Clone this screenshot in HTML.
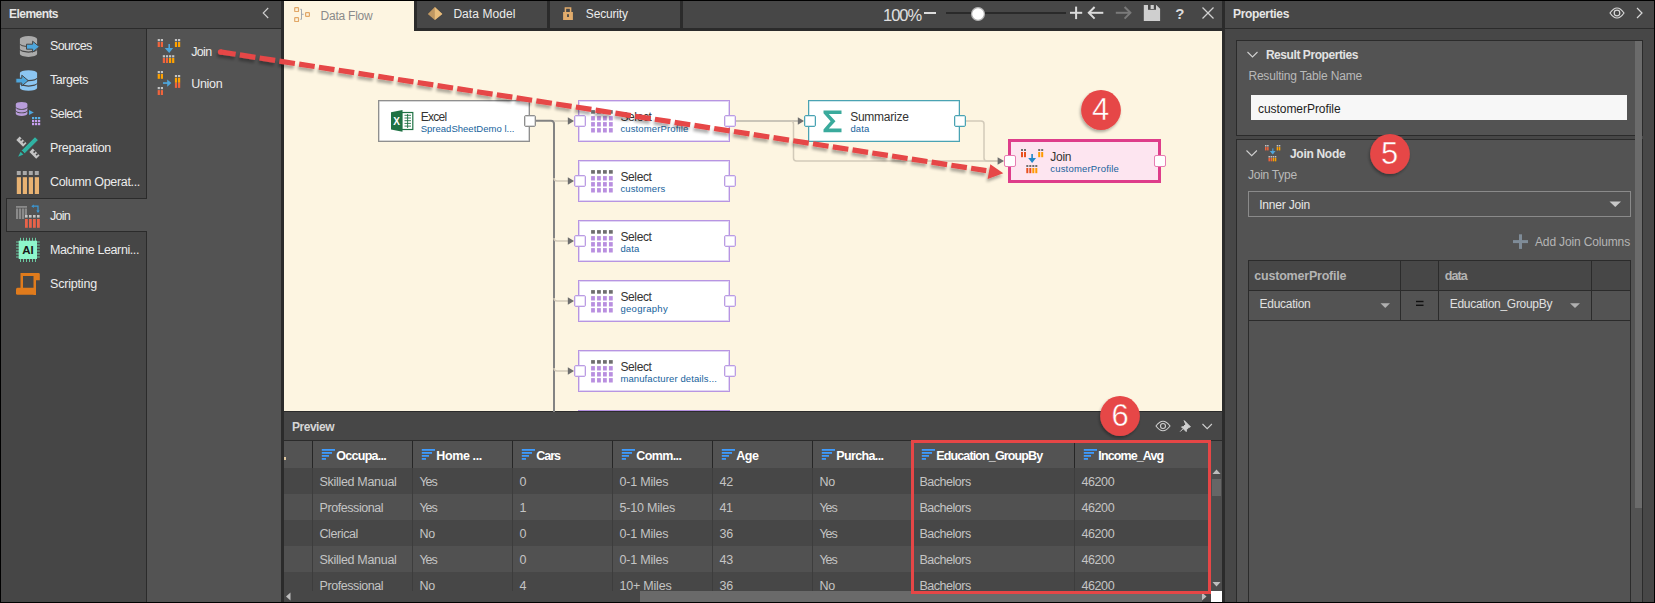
<!DOCTYPE html>
<html><head><meta charset="utf-8"><style>
html,body{margin:0;padding:0;}
body{width:1655px;height:603px;overflow:hidden;position:relative;background:#000;font-family:"Liberation Sans", sans-serif;}
.t{position:absolute;white-space:nowrap;line-height:1;}
svg{overflow:visible}
</style></head><body>
<div style="position:absolute;left:1px;top:1px;width:280px;height:27px;background:#474747;"></div>
<div style="position:absolute;left:1px;top:28px;width:280px;height:1px;background:#2b2b2b;"></div>
<div style="position:absolute;left:1px;top:29px;width:145px;height:574px;background:#464646;"></div>
<div style="position:absolute;left:146px;top:29px;width:1px;height:574px;background:#2b2b2b;"></div>
<div style="position:absolute;left:147px;top:29px;width:134px;height:574px;background:#535353;"></div>
<div style="position:absolute;left:281px;top:1px;width:3px;height:602px;background:#2b2b2b;"></div>
<div style="position:absolute;left:6px;top:198px;width:141px;height:34px;box-sizing:border-box;border:1px solid #2b2b2b;background:#535353;border-right:none;"></div>
<div class="t" id="T0" style="left:9px;top:7.84px;font-size:12px;color:#e6e6e6;font-weight:700;letter-spacing:-0.545px;">Elements</div>
<svg style="position:absolute;left:255px;top:0px;" width="20" height="30" viewBox="255 0 20 30"><polyline points="268.2,8 263.2,13 268.2,18" fill="none" stroke="#d0d0d0" stroke-width="1.1"/></svg>
<div class="t" id="T1" style="left:50px;top:40.02px;font-size:12.5px;color:#ececec;font-weight:400;letter-spacing:-0.594px;">Sources</div>
<div class="t" id="T2" style="left:50px;top:74.02px;font-size:12.5px;color:#ececec;font-weight:400;letter-spacing:-0.429px;">Targets</div>
<div class="t" id="T3" style="left:50px;top:108.02px;font-size:12.5px;color:#ececec;font-weight:400;letter-spacing:-0.575px;">Select</div>
<div class="t" id="T4" style="left:50px;top:142.02px;font-size:12.5px;color:#ececec;font-weight:400;letter-spacing:-0.330px;">Preparation</div>
<div class="t" id="T5" style="left:50px;top:176.02px;font-size:12.5px;color:#ececec;font-weight:400;letter-spacing:-0.324px;">Column Operat...</div>
<div class="t" id="T6" style="left:50px;top:210.02px;font-size:12.5px;color:#ececec;font-weight:400;letter-spacing:-0.734px;">Join</div>
<div class="t" id="T7" style="left:50px;top:244.02px;font-size:12.5px;color:#ececec;font-weight:400;letter-spacing:-0.405px;">Machine Learni...</div>
<div class="t" id="T8" style="left:50px;top:278.02px;font-size:12.5px;color:#ececec;font-weight:400;letter-spacing:-0.182px;">Scripting</div>
<div class="t" id="T9" style="left:191.2px;top:45.92px;font-size:12.5px;color:#ececec;font-weight:400;letter-spacing:-0.634px;">Join</div>
<div class="t" id="T10" style="left:191.2px;top:77.92px;font-size:12.5px;color:#ececec;font-weight:400;letter-spacing:-0.274px;">Union</div>
<div style="position:absolute;left:284px;top:1px;width:938px;height:27px;background:#474747;"></div>
<div style="position:absolute;left:284px;top:28px;width:938px;height:3px;background:#2b2b2b;"></div>
<div style="position:absolute;left:284px;top:1px;width:130px;height:30px;background:#fdf5e1;"></div>
<div style="position:absolute;left:414px;top:1px;width:3px;height:30px;background:#2b2b2b;"></div>
<div style="position:absolute;left:547px;top:1px;width:3px;height:30px;background:#2b2b2b;"></div>
<div style="position:absolute;left:680px;top:1px;width:3px;height:30px;background:#2b2b2b;"></div>
<div class="t" id="T11" style="left:320.5px;top:10.14px;font-size:12px;color:#8a8a8a;font-weight:400;letter-spacing:-0.226px;">Data Flow</div>
<div class="t" id="T12" style="left:453.4px;top:8.14px;font-size:12px;color:#ececec;font-weight:400;letter-spacing:0.062px;">Data Model</div>
<div class="t" id="T13" style="left:585.8px;top:8.14px;font-size:12px;color:#ececec;font-weight:400;letter-spacing:-0.170px;">Security</div>
<div class="t" id="T14" style="left:883px;top:6.53px;font-size:16.5px;color:#e0e0e0;font-weight:400;letter-spacing:-1.051px;">100%</div>
<div style="position:absolute;left:284px;top:31px;width:938px;height:380px;background:#fdf5e1;"></div>
<div style="position:absolute;left:284px;top:411px;width:938px;height:1px;background:#2b2b2b;"></div>
<div style="position:absolute;left:284px;top:412px;width:938px;height:28px;background:#474747;"></div>
<div class="t" id="T15" style="left:292px;top:420.84px;font-size:12px;color:#d6d6d6;font-weight:700;letter-spacing:-0.482px;">Preview</div>
<div style="position:absolute;left:284px;top:440px;width:938px;height:1px;background:#2b2b2b;"></div>
<div style="position:absolute;left:1222px;top:1px;width:3px;height:602px;background:#2b2b2b;"></div>
<div style="position:absolute;left:1225px;top:1px;width:429px;height:27px;background:#474747;"></div>
<div style="position:absolute;left:1225px;top:28px;width:429px;height:1px;background:#2b2b2b;"></div>
<div style="position:absolute;left:1225px;top:29px;width:429px;height:573px;background:#474747;"></div>
<div style="position:absolute;left:1236px;top:40px;width:407px;height:96px;box-sizing:border-box;border:1px solid #2b2b2b;background:#535353;"></div>
<div style="position:absolute;left:1236px;top:139px;width:407px;height:470px;box-sizing:border-box;border:1px solid #2b2b2b;background:#535353;"></div>
<div style="position:absolute;left:1635px;top:41px;width:7px;height:467px;background:#6b6b6b;"></div>
<div class="t" id="T16" style="left:1233px;top:7.84px;font-size:12px;color:#e6e6e6;font-weight:700;letter-spacing:-0.336px;">Properties</div>
<svg style="position:absolute;left:14px;top:30px;" width="30" height="32" viewBox="14 30 30 32"><g fill="#ababab">
<path d="M19.9,38.90 a8.6,2.8 0 0 1 17.2,0 v4.27 a8.6,2.8 0 0 1 -17.2,0z"/>
<path d="M19.9,44.37 a8.6,2.8 0 0 0 17.2,0 v4.27 a8.6,2.8 0 0 1 -17.2,0z"/>
<path d="M19.9,49.84 a8.6,2.8 0 0 0 17.2,0 v4.27 a8.6,2.8 0 0 1 -17.2,0z"/>
</g>
<polygon points="26.5,44.2 32.6,44.2 32.6,41.2 39.4,46.7 32.6,52.2 32.6,49.2 26.5,49.2" fill="#4ea6dc" stroke="#464646" stroke-width="1"/></svg>
<svg style="position:absolute;left:10px;top:64px;" width="34" height="34" viewBox="10 64 34 34"><g fill="#8cc6f2">
<path d="M19.9,73.10 a8.6,2.8 0 0 1 17.2,0 v4.17 a8.6,2.8 0 0 1 -17.2,0z"/>
<path d="M19.9,78.47 a8.6,2.8 0 0 0 17.2,0 v4.17 a8.6,2.8 0 0 1 -17.2,0z"/>
<path d="M19.9,83.84 a8.6,2.8 0 0 0 17.2,0 v4.17 a8.6,2.8 0 0 1 -17.2,0z"/>
</g>
<polygon points="15.8,78.2 21.8,78.2 21.8,75.2 28.2,80.6 21.8,86 21.8,83 15.8,83" fill="#4ea6dc" stroke="#464646" stroke-width="1"/></svg>
<svg style="position:absolute;left:10px;top:96px;" width="34" height="34" viewBox="10 96 34 34"><g fill="#b89ddb">
<path d="M15.8,104.10 a5.8,2.2 0 0 1 11.6,0 v2.60 a5.8,2.2 0 0 1 -11.6,0z"/>
<path d="M15.8,107.60 a5.8,2.2 0 0 0 11.6,0 v2.60 a5.8,2.2 0 0 1 -11.6,0z"/>
<path d="M15.8,111.10 a5.8,2.2 0 0 0 11.6,0 v2.60 a5.8,2.2 0 0 1 -11.6,0z"/>
</g>
<polygon points="29,110 33.8,112.5 29,115.1" fill="#4ea6dc"/>
<g fill="#c79ff0"><rect x="32" y="117" width="2.2" height="2.2" fill="#56b0e6"/><rect x="35" y="117" width="2.2" height="2.2" fill="#56b0e6"/><rect x="38" y="117" width="2.2" height="2.2" fill="#56b0e6"/>
<rect x="32" y="120" width="2.2" height="2.2"/><rect x="35" y="120" width="2.2" height="2.2"/><rect x="38" y="120" width="2.2" height="2.2"/>
<rect x="32" y="123" width="2.2" height="2.2"/><rect x="35" y="123" width="2.2" height="2.2"/><rect x="38" y="123" width="2.2" height="2.2"/></g></svg>
<svg style="position:absolute;left:12px;top:132px;" width="32" height="32" viewBox="12 132 32 32"><g fill="#c4c4c4">
<g transform="translate(21.4,141.6) rotate(45)"><rect x="-4.8" y="-2.4" width="9.6" height="4.8"/></g>
<g transform="translate(34.5,153.7) rotate(45)"><rect x="-4.8" y="-2.4" width="9.6" height="4.8"/></g>
</g>
<g fill="#464646">
<g transform="translate(21.4,141.6) rotate(45)"><rect x="-2.2" y="-2.5" width="1.6" height="2.4"/><rect x="1.4" y="-2.5" width="1.6" height="2.4"/></g>
<g transform="translate(34.5,153.7) rotate(45)"><rect x="-2.2" y="-2.5" width="1.6" height="2.4"/><rect x="1.4" y="-2.5" width="1.6" height="2.4"/></g>
</g>
<polygon points="38.4,140.1 35,136.7 21.3,150.4 24.7,153.8" fill="#2fb3a3" stroke="#464646" stroke-width="0.9"/>
<polygon points="23.4,154.5 20.6,151.7 18.1,156.8" fill="#2fb3a3"/></svg>
<svg style="position:absolute;left:12px;top:166px;" width="32" height="32" viewBox="12 166 32 32"><rect x="16.8" y="171" width="4" height="4" fill="#a9a9a9"/><rect x="16.8" y="177.2" width="4.2" height="16.8" fill="#e8b272"/><rect x="22.8" y="171" width="4" height="4" fill="#a9a9a9"/><rect x="22.8" y="177.2" width="4.2" height="16.8" fill="#e8b272"/><rect x="28.8" y="171" width="4" height="4" fill="#a9a9a9"/><rect x="28.8" y="177.2" width="4.2" height="16.8" fill="#e8b272"/><rect x="34.8" y="171" width="4" height="4" fill="#a9a9a9"/><rect x="34.8" y="177.2" width="4.2" height="16.8" fill="#e8b272"/></svg>
<svg style="position:absolute;left:12px;top:200px;" width="32" height="32" viewBox="12 200 32 32"><g fill="#8a8a8a"><rect x="16" y="206" width="11" height="1.8"/>
<rect x="16" y="208.5" width="2.2" height="10.5"/><rect x="19" y="208.5" width="2.2" height="10.5"/><rect x="22" y="208.5" width="2.2" height="10.5"/><rect x="24.8" y="208.5" width="2.2" height="6.5"/></g>
<g fill="#c4c4c4"><rect x="25" y="215" width="2.6" height="2.6"/><rect x="29" y="215" width="2.6" height="2.6"/><rect x="33" y="215" width="2.6" height="2.6"/><rect x="37" y="215" width="2.6" height="2.6"/></g>
<g fill="#e8634a"><rect x="25" y="219" width="2.8" height="8.8"/><rect x="29" y="219" width="2.8" height="8.8"/><rect x="33" y="219" width="2.8" height="8.8"/><rect x="37" y="219" width="2.8" height="8.8"/></g>
<path d="M33.5,206.2 H38 V211" fill="none" stroke="#3a9ad9" stroke-width="1.2"/>
<polygon points="31.3,206.2 33.8,204.5 33.8,207.9" fill="#3a9ad9"/><polygon points="36.3,210.5 39.7,210.5 38,213" fill="#3a9ad9"/></svg>
<svg style="position:absolute;left:12px;top:234px;" width="32" height="32" viewBox="12 234 32 32"><g stroke="#6fd8ac" stroke-width="0.9"><line x1="20.5" y1="237.8" x2="20.5" y2="262"/><line x1="23.5" y1="237.8" x2="23.5" y2="262"/><line x1="26.5" y1="237.8" x2="26.5" y2="262"/><line x1="29.5" y1="237.8" x2="29.5" y2="262"/><line x1="32.5" y1="237.8" x2="32.5" y2="262"/><line x1="35.5" y1="237.8" x2="35.5" y2="262"/><line x1="16" y1="242" x2="39.8" y2="242"/><line x1="16" y1="245" x2="39.8" y2="245"/><line x1="16" y1="248" x2="39.8" y2="248"/><line x1="16" y1="251" x2="39.8" y2="251"/><line x1="16" y1="254" x2="39.8" y2="254"/><line x1="16" y1="257" x2="39.8" y2="257"/></g>
<rect x="18.7" y="240.7" width="18.3" height="18.3" fill="#8ef7cc"/>
<text x="27.9" y="254.3" font-family="Liberation Sans" font-weight="700" font-size="11.5" fill="#1a1a1a" text-anchor="middle">AI</text></svg>
<svg style="position:absolute;left:12px;top:268px;" width="32" height="32" viewBox="12 268 32 32"><g fill="#e07b1c">
<path d="M20.5,273 H38.5 a1.3,1.3 0 0 1 1.3,1.3 V280.2 H35.8 V276 H23 V289 H20.5z"/>
<rect x="33.5" y="276" width="2.5" height="19"/>
<path d="M17.5,287.8 H36 V294.8 H17.5 a1.5,1.5 0 0 1 -1.5,-1.5 V289.3 a1.5,1.5 0 0 1 1.5,-1.5z"/>
</g></svg>
<svg style="position:absolute;left:150px;top:34px;" width="36" height="34" viewBox="150 34 36 34"><rect x="157.70" y="39.00" width="2.20" height="2.20" fill="#c4c4c4"/><rect x="157.70" y="42.00" width="2.20" height="5.00" fill="#f0643c"/><rect x="160.80" y="39.00" width="2.20" height="2.20" fill="#c4c4c4"/><rect x="160.80" y="42.00" width="2.20" height="5.00" fill="#f0643c"/><rect x="174.90" y="39.00" width="2.20" height="2.20" fill="#c4c4c4"/><rect x="174.90" y="42.00" width="2.20" height="5.00" fill="#ffa200"/><rect x="178.00" y="39.00" width="2.20" height="2.20" fill="#c4c4c4"/><rect x="178.00" y="42.00" width="2.20" height="5.00" fill="#ffa200"/><rect x="162.80" y="55.20" width="2.20" height="2.20" fill="#c4c4c4"/><rect x="162.80" y="58.00" width="2.20" height="5.00" fill="#f0643c"/><rect x="165.90" y="55.20" width="2.20" height="2.20" fill="#c4c4c4"/><rect x="165.90" y="58.00" width="2.20" height="5.00" fill="#f0643c"/><rect x="169.00" y="55.20" width="2.20" height="2.20" fill="#c4c4c4"/><rect x="169.00" y="58.00" width="2.20" height="5.00" fill="#ffa200"/><rect x="172.10" y="55.20" width="2.20" height="2.20" fill="#c4c4c4"/><rect x="172.10" y="58.00" width="2.20" height="5.00" fill="#ffa200"/><rect x="168.40" y="44.00" width="1.60" height="5.00" fill="#4ea6dc"/><polygon points="164.70,48.00 173.10,48.00 169.20,53.00" fill="#4ea6dc"/></svg>
<svg style="position:absolute;left:150px;top:66px;" width="36" height="34" viewBox="150 66 36 34"><rect x="157.7" y="71" width="2.2" height="2.2" fill="#c4c4c4"/><rect x="157.7" y="74" width="2.2" height="4.8" fill="#ffa200"/><rect x="157.7" y="87" width="2.2" height="2.2" fill="#c4c4c4"/><rect x="157.7" y="90.1" width="2.2" height="4.9" fill="#f0643c"/><rect x="160.79999999999998" y="71" width="2.2" height="2.2" fill="#c4c4c4"/><rect x="160.79999999999998" y="74" width="2.2" height="4.8" fill="#ffa200"/><rect x="160.79999999999998" y="87" width="2.2" height="2.2" fill="#c4c4c4"/><rect x="160.79999999999998" y="90.1" width="2.2" height="4.9" fill="#f0643c"/><rect x="174.89999999999998" y="75" width="2.2" height="2" fill="#c4c4c4"/><rect x="174.89999999999998" y="77.7" width="2.2" height="5.1" fill="#ffa200"/><rect x="174.89999999999998" y="82.8" width="2.2" height="5.1" fill="#f0643c"/><rect x="178.0" y="75" width="2.2" height="2" fill="#c4c4c4"/><rect x="178.0" y="77.7" width="2.2" height="5.1" fill="#ffa200"/><rect x="178.0" y="82.8" width="2.2" height="5.1" fill="#f0643c"/><rect x="163.0" y="82.2" width="6" height="1.7" fill="#4ea6dc"/><polygon points="167.2,79.4 171.39999999999998,83 167.2,86.7" fill="#4ea6dc"/></svg>
<svg style="position:absolute;left:290px;top:3px;" width="24" height="24" viewBox="290 3 24 24"><g fill="none" stroke="#e2a868" stroke-width="1.2">
<rect x="294.7" y="7.7" width="3.8" height="3.8" rx="0.6"/><rect x="294.7" y="17.7" width="3.8" height="3.8" rx="0.6"/><rect x="305.6" y="12.6" width="3.8" height="3.8" rx="0.6"/></g>
<path d="M300.3,9.3 h1.2 v10 h-1.2 M301.5,14.3 h2.2" fill="none" stroke="#9aa3ad" stroke-width="0.9"/></svg>
<svg style="position:absolute;left:424px;top:3px;" width="22" height="22" viewBox="424 3 22 22"><polygon points="434.8,7 442.3,14 434.8,20 427.8,14" fill="#c09862"/><polygon points="434.8,7 442.3,14 434.8,20" fill="#e8bd7c"/></svg>
<svg style="position:absolute;left:558px;top:3px;" width="22" height="22" viewBox="558 3 22 22"><path d="M565.4,12.5 V8.1 H570.6 V12.5" fill="none" stroke="#e2ac6c" stroke-width="1.5"/>
<rect x="563.1" y="12" width="9.8" height="8" fill="#e2ac6c"/><rect x="567.1" y="14.2" width="1.8" height="2.8" fill="#474747"/></svg>
<div style="position:absolute;left:924px;top:12px;width:12px;height:2px;background:#dcdcdc;"></div>
<div style="position:absolute;left:946px;top:12px;width:120px;height:2px;background:#2a2a2a;"></div>
<svg style="position:absolute;left:968px;top:4px;" width="20" height="20" viewBox="968 4 20 20"><circle cx="978" cy="14" r="6.4" fill="#ffffff" stroke="#b0b0b0" stroke-width="1.2"/></svg>
<svg style="position:absolute;left:1060px;top:0px;" width="160" height="28" viewBox="1060 0 160 28"><g stroke="#dcdcdc" stroke-width="2" fill="none">
<line x1="1070" y1="12.8" x2="1082.2" y2="12.8"/><line x1="1076.1" y1="6.6" x2="1076.1" y2="19.1"/>
<line x1="1088.8" y1="12.8" x2="1103.3" y2="12.8"/><polyline points="1094.6,7 1088.8,12.8 1094.6,18.6"/>
</g>
<g stroke="#7a7a7a" stroke-width="2" fill="none">
<line x1="1115.8" y1="12.8" x2="1130.4" y2="12.8"/><polyline points="1124.6,7 1130.4,12.8 1124.6,18.6"/>
</g>
<path d="M1143.8,5 H1156.3 L1160.1,8.8 V21.1 H1143.8z" fill="#cfcfcf"/>
<rect x="1148" y="5" width="8" height="4.8" fill="#474747"/><rect x="1150.6" y="5" width="3.2" height="4" fill="#cfcfcf"/>
<g stroke="#d0d0d0" stroke-width="1.3"><line x1="1202.5" y1="7.5" x2="1213.5" y2="18.5"/><line x1="1213.5" y1="7.5" x2="1202.5" y2="18.5"/></g></svg>
<div class="t" id="T17" style="left:1175.3px;top:5.70px;font-size:15px;color:#dcdcdc;font-weight:700;">?</div>
<svg style="position:absolute;left:284px;top:31px;" width="938" height="380" viewBox="284 31 938 380"><path d="M535.5,120.8 H551 a3,3 0 0 1 3,3 V412" fill="none" stroke="#838383" stroke-width="2"/><path d="M554,121 H568" fill="none" stroke="#d2cab9" stroke-width="1.5"/><polygon points="567.8,117.2 574,121 567.8,124.8" fill="#6e6e6e"/><path d="M554,178 a3,3 0 0 0 3,3 H568" fill="none" stroke="#d2cab9" stroke-width="1.5"/><polygon points="567.8,177.2 574,181 567.8,184.8" fill="#6e6e6e"/><path d="M554,238 a3,3 0 0 0 3,3 H568" fill="none" stroke="#d2cab9" stroke-width="1.5"/><polygon points="567.8,237.2 574,241 567.8,244.8" fill="#6e6e6e"/><path d="M554,298 a3,3 0 0 0 3,3 H568" fill="none" stroke="#d2cab9" stroke-width="1.5"/><polygon points="567.8,297.2 574,301 567.8,304.8" fill="#6e6e6e"/><path d="M554,368 a3,3 0 0 0 3,3 H568" fill="none" stroke="#d2cab9" stroke-width="1.5"/><polygon points="567.8,367.2 574,371 567.8,374.8" fill="#6e6e6e"/><path d="M736,121 H798" fill="none" stroke="#b9b4aa" stroke-width="1.5"/><polygon points="797.8,117.2 804,121 797.8,124.8" fill="#6e6e6e"/><path d="M790.5,121 a3,3 0 0 1 3,3 V158 a3,3 0 0 0 3,3 H998" fill="none" stroke="#d2cab9" stroke-width="1.5"/><path d="M966,121 H981 a3,3 0 0 1 3,3 V158 a3,3 0 0 0 3,3 H998" fill="none" stroke="#d2cab9" stroke-width="1.5"/><polygon points="997.6,157.2 1004,161 997.6,164.8" fill="#6e6e6e"/></svg>
<div style="position:absolute;left:378px;top:100px;width:152px;height:42px;box-sizing:border-box;border:1px solid #8f8f8f;background:#ffffff;box-shadow:inset 0 0 0 0.5px #b0b0b0;"></div>
<div style="position:absolute;left:523.5px;top:115px;width:12px;height:12px;box-sizing:border-box;border:1px solid #8f8f8f;background:#ffffff;border-radius:2px;box-shadow:inset 0 0 0 1px #d8d8d8;"></div>
<svg style="position:absolute;left:386px;top:106px;" width="30" height="30" viewBox="386 106 30 30"><path d="M391,112.2 L402.5,110 V131.8 L391,129.6z" fill="#1f7244"/>
<rect x="402" y="112.5" width="10.8" height="17" fill="#ffffff" stroke="#1f7244" stroke-width="1.2"/>
<g stroke="#1f7244" stroke-width="0.9"><line x1="404.5" y1="115.3" x2="411" y2="115.3"/><line x1="404.5" y1="118" x2="411" y2="118"/><line x1="404.5" y1="120.7" x2="411" y2="120.7"/><line x1="404.5" y1="123.4" x2="411" y2="123.4"/><line x1="404.5" y1="126.1" x2="411" y2="126.1"/><line x1="407.6" y1="114" x2="407.6" y2="128"/></g>
<text x="396.7" y="125.3" font-family="Liberation Sans" font-weight="700" font-size="10" fill="#ffffff" text-anchor="middle">X</text></svg>
<div class="t" id="T18" style="left:420.7px;top:110.64px;font-size:12px;color:#333333;font-weight:400;letter-spacing:-0.729px;">Excel</div>
<div class="t" id="T19" style="left:420.7px;top:123.76px;font-size:9.5px;color:#16629c;font-weight:400;letter-spacing:0.016px;">SpreadSheetDemo l...</div>
<div style="position:absolute;left:578px;top:100px;width:152px;height:42px;box-sizing:border-box;border:1px solid #b795e2;background:#ffffff;box-shadow:inset 0 0 0 1px #e2d6f4;"></div>
<div style="position:absolute;left:573.5px;top:115px;width:12px;height:12px;box-sizing:border-box;border:1px solid #bb9ce4;background:#ffffff;border-radius:2px;box-shadow:inset 0 0 0 1px #e9e0f6;"></div>
<div style="position:absolute;left:723.5px;top:115px;width:12px;height:12px;box-sizing:border-box;border:1px solid #bb9ce4;background:#ffffff;border-radius:2px;box-shadow:inset 0 0 0 1px #e9e0f6;"></div>
<svg style="position:absolute;left:586px;top:105px;" width="32" height="32" viewBox="586 105 32 32"><rect x="591.10" y="110.10" width="3.8" height="3.6" fill="#6e6e6e"/><rect x="597.05" y="110.10" width="3.8" height="3.6" fill="#6e6e6e"/><rect x="603.00" y="110.10" width="3.8" height="3.6" fill="#6e6e6e"/><rect x="608.95" y="110.10" width="3.8" height="3.6" fill="#6e6e6e"/><rect x="591.10" y="116.10" width="3.8" height="4.4" fill="#b98fe0"/><rect x="597.05" y="116.10" width="3.8" height="4.4" fill="#b98fe0"/><rect x="603.00" y="116.10" width="3.8" height="4.4" fill="#b98fe0"/><rect x="608.95" y="116.10" width="3.8" height="4.4" fill="#b98fe0"/><rect x="591.10" y="122.10" width="3.8" height="4.4" fill="#b98fe0"/><rect x="597.05" y="122.10" width="3.8" height="4.4" fill="#b98fe0"/><rect x="603.00" y="122.10" width="3.8" height="4.4" fill="#b98fe0"/><rect x="608.95" y="122.10" width="3.8" height="4.4" fill="#b98fe0"/><rect x="591.10" y="128.10" width="3.8" height="4.4" fill="#b98fe0"/><rect x="597.05" y="128.10" width="3.8" height="4.4" fill="#b98fe0"/><rect x="603.00" y="128.10" width="3.8" height="4.4" fill="#b98fe0"/><rect x="608.95" y="128.10" width="3.8" height="4.4" fill="#b98fe0"/></svg>
<div class="t" id="T20" style="left:620.4px;top:110.84px;font-size:12px;color:#333333;font-weight:400;letter-spacing:-0.360px;">Select</div>
<div class="t" id="T21" style="left:620.4px;top:123.76px;font-size:9.5px;color:#16629c;font-weight:400;letter-spacing:0.133px;">customerProfile</div>
<div style="position:absolute;left:578px;top:160px;width:152px;height:42px;box-sizing:border-box;border:1px solid #b795e2;background:#ffffff;box-shadow:inset 0 0 0 1px #e2d6f4;"></div>
<div style="position:absolute;left:573.5px;top:175px;width:12px;height:12px;box-sizing:border-box;border:1px solid #bb9ce4;background:#ffffff;border-radius:2px;box-shadow:inset 0 0 0 1px #e9e0f6;"></div>
<div style="position:absolute;left:723.5px;top:175px;width:12px;height:12px;box-sizing:border-box;border:1px solid #bb9ce4;background:#ffffff;border-radius:2px;box-shadow:inset 0 0 0 1px #e9e0f6;"></div>
<svg style="position:absolute;left:586px;top:165px;" width="32" height="32" viewBox="586 165 32 32"><rect x="591.10" y="170.10" width="3.8" height="3.6" fill="#6e6e6e"/><rect x="597.05" y="170.10" width="3.8" height="3.6" fill="#6e6e6e"/><rect x="603.00" y="170.10" width="3.8" height="3.6" fill="#6e6e6e"/><rect x="608.95" y="170.10" width="3.8" height="3.6" fill="#6e6e6e"/><rect x="591.10" y="176.10" width="3.8" height="4.4" fill="#b98fe0"/><rect x="597.05" y="176.10" width="3.8" height="4.4" fill="#b98fe0"/><rect x="603.00" y="176.10" width="3.8" height="4.4" fill="#b98fe0"/><rect x="608.95" y="176.10" width="3.8" height="4.4" fill="#b98fe0"/><rect x="591.10" y="182.10" width="3.8" height="4.4" fill="#b98fe0"/><rect x="597.05" y="182.10" width="3.8" height="4.4" fill="#b98fe0"/><rect x="603.00" y="182.10" width="3.8" height="4.4" fill="#b98fe0"/><rect x="608.95" y="182.10" width="3.8" height="4.4" fill="#b98fe0"/><rect x="591.10" y="188.10" width="3.8" height="4.4" fill="#b98fe0"/><rect x="597.05" y="188.10" width="3.8" height="4.4" fill="#b98fe0"/><rect x="603.00" y="188.10" width="3.8" height="4.4" fill="#b98fe0"/><rect x="608.95" y="188.10" width="3.8" height="4.4" fill="#b98fe0"/></svg>
<div class="t" id="T22" style="left:620.4px;top:170.84px;font-size:12px;color:#333333;font-weight:400;letter-spacing:-0.360px;">Select</div>
<div class="t" id="T23" style="left:620.4px;top:183.76px;font-size:9.5px;color:#16629c;font-weight:400;letter-spacing:0.130px;">customers</div>
<div style="position:absolute;left:578px;top:220px;width:152px;height:42px;box-sizing:border-box;border:1px solid #b795e2;background:#ffffff;box-shadow:inset 0 0 0 1px #e2d6f4;"></div>
<div style="position:absolute;left:573.5px;top:235px;width:12px;height:12px;box-sizing:border-box;border:1px solid #bb9ce4;background:#ffffff;border-radius:2px;box-shadow:inset 0 0 0 1px #e9e0f6;"></div>
<div style="position:absolute;left:723.5px;top:235px;width:12px;height:12px;box-sizing:border-box;border:1px solid #bb9ce4;background:#ffffff;border-radius:2px;box-shadow:inset 0 0 0 1px #e9e0f6;"></div>
<svg style="position:absolute;left:586px;top:225px;" width="32" height="32" viewBox="586 225 32 32"><rect x="591.10" y="230.10" width="3.8" height="3.6" fill="#6e6e6e"/><rect x="597.05" y="230.10" width="3.8" height="3.6" fill="#6e6e6e"/><rect x="603.00" y="230.10" width="3.8" height="3.6" fill="#6e6e6e"/><rect x="608.95" y="230.10" width="3.8" height="3.6" fill="#6e6e6e"/><rect x="591.10" y="236.10" width="3.8" height="4.4" fill="#b98fe0"/><rect x="597.05" y="236.10" width="3.8" height="4.4" fill="#b98fe0"/><rect x="603.00" y="236.10" width="3.8" height="4.4" fill="#b98fe0"/><rect x="608.95" y="236.10" width="3.8" height="4.4" fill="#b98fe0"/><rect x="591.10" y="242.10" width="3.8" height="4.4" fill="#b98fe0"/><rect x="597.05" y="242.10" width="3.8" height="4.4" fill="#b98fe0"/><rect x="603.00" y="242.10" width="3.8" height="4.4" fill="#b98fe0"/><rect x="608.95" y="242.10" width="3.8" height="4.4" fill="#b98fe0"/><rect x="591.10" y="248.10" width="3.8" height="4.4" fill="#b98fe0"/><rect x="597.05" y="248.10" width="3.8" height="4.4" fill="#b98fe0"/><rect x="603.00" y="248.10" width="3.8" height="4.4" fill="#b98fe0"/><rect x="608.95" y="248.10" width="3.8" height="4.4" fill="#b98fe0"/></svg>
<div class="t" id="T24" style="left:620.4px;top:230.84px;font-size:12px;color:#333333;font-weight:400;letter-spacing:-0.360px;">Select</div>
<div class="t" id="T25" style="left:620.4px;top:243.76px;font-size:9.5px;color:#16629c;font-weight:400;letter-spacing:0.125px;">data</div>
<div style="position:absolute;left:578px;top:280px;width:152px;height:42px;box-sizing:border-box;border:1px solid #b795e2;background:#ffffff;box-shadow:inset 0 0 0 1px #e2d6f4;"></div>
<div style="position:absolute;left:573.5px;top:295px;width:12px;height:12px;box-sizing:border-box;border:1px solid #bb9ce4;background:#ffffff;border-radius:2px;box-shadow:inset 0 0 0 1px #e9e0f6;"></div>
<div style="position:absolute;left:723.5px;top:295px;width:12px;height:12px;box-sizing:border-box;border:1px solid #bb9ce4;background:#ffffff;border-radius:2px;box-shadow:inset 0 0 0 1px #e9e0f6;"></div>
<svg style="position:absolute;left:586px;top:285px;" width="32" height="32" viewBox="586 285 32 32"><rect x="591.10" y="290.10" width="3.8" height="3.6" fill="#6e6e6e"/><rect x="597.05" y="290.10" width="3.8" height="3.6" fill="#6e6e6e"/><rect x="603.00" y="290.10" width="3.8" height="3.6" fill="#6e6e6e"/><rect x="608.95" y="290.10" width="3.8" height="3.6" fill="#6e6e6e"/><rect x="591.10" y="296.10" width="3.8" height="4.4" fill="#b98fe0"/><rect x="597.05" y="296.10" width="3.8" height="4.4" fill="#b98fe0"/><rect x="603.00" y="296.10" width="3.8" height="4.4" fill="#b98fe0"/><rect x="608.95" y="296.10" width="3.8" height="4.4" fill="#b98fe0"/><rect x="591.10" y="302.10" width="3.8" height="4.4" fill="#b98fe0"/><rect x="597.05" y="302.10" width="3.8" height="4.4" fill="#b98fe0"/><rect x="603.00" y="302.10" width="3.8" height="4.4" fill="#b98fe0"/><rect x="608.95" y="302.10" width="3.8" height="4.4" fill="#b98fe0"/><rect x="591.10" y="308.10" width="3.8" height="4.4" fill="#b98fe0"/><rect x="597.05" y="308.10" width="3.8" height="4.4" fill="#b98fe0"/><rect x="603.00" y="308.10" width="3.8" height="4.4" fill="#b98fe0"/><rect x="608.95" y="308.10" width="3.8" height="4.4" fill="#b98fe0"/></svg>
<div class="t" id="T26" style="left:620.4px;top:290.84px;font-size:12px;color:#333333;font-weight:400;letter-spacing:-0.360px;">Select</div>
<div class="t" id="T27" style="left:620.4px;top:303.76px;font-size:9.5px;color:#16629c;font-weight:400;letter-spacing:0.299px;">geography</div>
<div style="position:absolute;left:578px;top:350px;width:152px;height:42px;box-sizing:border-box;border:1px solid #b795e2;background:#ffffff;box-shadow:inset 0 0 0 1px #e2d6f4;"></div>
<div style="position:absolute;left:573.5px;top:365px;width:12px;height:12px;box-sizing:border-box;border:1px solid #bb9ce4;background:#ffffff;border-radius:2px;box-shadow:inset 0 0 0 1px #e9e0f6;"></div>
<div style="position:absolute;left:723.5px;top:365px;width:12px;height:12px;box-sizing:border-box;border:1px solid #bb9ce4;background:#ffffff;border-radius:2px;box-shadow:inset 0 0 0 1px #e9e0f6;"></div>
<svg style="position:absolute;left:586px;top:355px;" width="32" height="32" viewBox="586 355 32 32"><rect x="591.10" y="360.10" width="3.8" height="3.6" fill="#6e6e6e"/><rect x="597.05" y="360.10" width="3.8" height="3.6" fill="#6e6e6e"/><rect x="603.00" y="360.10" width="3.8" height="3.6" fill="#6e6e6e"/><rect x="608.95" y="360.10" width="3.8" height="3.6" fill="#6e6e6e"/><rect x="591.10" y="366.10" width="3.8" height="4.4" fill="#b98fe0"/><rect x="597.05" y="366.10" width="3.8" height="4.4" fill="#b98fe0"/><rect x="603.00" y="366.10" width="3.8" height="4.4" fill="#b98fe0"/><rect x="608.95" y="366.10" width="3.8" height="4.4" fill="#b98fe0"/><rect x="591.10" y="372.10" width="3.8" height="4.4" fill="#b98fe0"/><rect x="597.05" y="372.10" width="3.8" height="4.4" fill="#b98fe0"/><rect x="603.00" y="372.10" width="3.8" height="4.4" fill="#b98fe0"/><rect x="608.95" y="372.10" width="3.8" height="4.4" fill="#b98fe0"/><rect x="591.10" y="378.10" width="3.8" height="4.4" fill="#b98fe0"/><rect x="597.05" y="378.10" width="3.8" height="4.4" fill="#b98fe0"/><rect x="603.00" y="378.10" width="3.8" height="4.4" fill="#b98fe0"/><rect x="608.95" y="378.10" width="3.8" height="4.4" fill="#b98fe0"/></svg>
<div class="t" id="T28" style="left:620.4px;top:360.84px;font-size:12px;color:#333333;font-weight:400;letter-spacing:-0.360px;">Select</div>
<div class="t" id="T29" style="left:620.4px;top:373.76px;font-size:9.5px;color:#16629c;font-weight:400;letter-spacing:0.109px;">manufacturer details...</div>
<div style="position:absolute;left:578px;top:410px;width:152px;height:1px;background:#b38fe0;"></div>
<div style="position:absolute;left:808px;top:100px;width:152px;height:42px;box-sizing:border-box;border:1px solid #4aa3b3;background:#ffffff;box-shadow:inset 0 0 0 0.5px #9fd0d8;"></div>
<div style="position:absolute;left:803.5px;top:115px;width:12px;height:12px;box-sizing:border-box;border:1px solid #4aa3b3;background:#ffffff;border-radius:2px;box-shadow:inset 0 0 0 1px #cfe8ec;"></div>
<div style="position:absolute;left:953.5px;top:115px;width:12px;height:12px;box-sizing:border-box;border:1px solid #4aa3b3;background:#ffffff;border-radius:2px;box-shadow:inset 0 0 0 1px #cfe8ec;"></div>
<svg style="position:absolute;left:820px;top:106px;" width="26" height="30" viewBox="820 106 26 30"><path d="M823.5,110.5 H841.5 V114 H828.8 L835.5,121.3 L828.8,128.6 H841.5 V132.2 H823.5 V129.5 L830.6,121.3 L823.5,113.2z" fill="#3aaa9c"/></svg>
<div class="t" id="T30" style="left:850.2px;top:111.14px;font-size:12px;color:#333333;font-weight:400;letter-spacing:-0.254px;">Summarize</div>
<div class="t" id="T31" style="left:850.4px;top:123.56px;font-size:9.5px;color:#16629c;font-weight:400;letter-spacing:0.125px;">data</div>
<div style="position:absolute;left:1007.5px;top:139px;width:153px;height:43.5px;box-sizing:border-box;border:3px solid #de3d8a;background:#fde5f0;"></div>
<div style="position:absolute;left:1003.5px;top:155px;width:12px;height:12px;box-sizing:border-box;border:1px solid #e77eb3;background:#ffffff;border-radius:2px;"></div>
<div style="position:absolute;left:1153.5px;top:155px;width:12px;height:12px;box-sizing:border-box;border:1px solid #e77eb3;background:#ffffff;border-radius:2px;"></div>
<svg style="position:absolute;left:1016px;top:144px;" width="32" height="34" viewBox="1016 144 32 34"><rect x="1021.00" y="149.00" width="2" height="2" fill="#6e6e6e"/><rect x="1021.00" y="152.00" width="2" height="5.2" fill="#e8501e"/><rect x="1024.00" y="149.00" width="2" height="2" fill="#6e6e6e"/><rect x="1024.00" y="152.00" width="2" height="5.2" fill="#e8501e"/><rect x="1038.20" y="149.00" width="2" height="2" fill="#6e6e6e"/><rect x="1038.20" y="152.00" width="2" height="5.2" fill="#ff9a00"/><rect x="1041.20" y="149.00" width="2" height="2" fill="#6e6e6e"/><rect x="1041.20" y="152.00" width="2" height="5.2" fill="#ff9a00"/><rect x="1026.30" y="165.00" width="2" height="2" fill="#6e6e6e"/><rect x="1026.30" y="168.00" width="2" height="5.2" fill="#e8501e"/><rect x="1029.30" y="165.00" width="2" height="2" fill="#6e6e6e"/><rect x="1029.30" y="168.00" width="2" height="5.2" fill="#e8501e"/><rect x="1032.30" y="165.00" width="2" height="2" fill="#6e6e6e"/><rect x="1032.30" y="168.00" width="2" height="5.2" fill="#ff9a00"/><rect x="1035.30" y="165.00" width="2" height="2" fill="#6e6e6e"/><rect x="1035.30" y="168.00" width="2" height="5.2" fill="#ff9a00"/><rect x="1031.30" y="154.00" width="1.6" height="5" fill="#2188c9"/><polygon points="1028.2,158 1036,158 1032.1,163" fill="#2188c9"/></svg>
<div class="t" id="T32" style="left:1050.3px;top:150.74px;font-size:12px;color:#333333;font-weight:400;letter-spacing:-0.254px;">Join</div>
<div class="t" id="T33" style="left:1050.3px;top:163.86px;font-size:9.5px;color:#16629c;font-weight:400;letter-spacing:0.180px;">customerProfile</div>
<svg style="position:absolute;left:1600px;top:0px;" width="50" height="28" viewBox="1600 0 50 28"><g fill="none" stroke="#d8d8d8" stroke-width="1.2">
<path d="M1610,13 Q1617,3 1624,13 Q1617,23 1610,13Z"/>
<circle cx="1617" cy="13" r="2.8"/>
<polyline points="1637,8 1642,13 1637,18"/>
</g></svg>
<svg style="position:absolute;left:1240px;top:45px;" width="24" height="20" viewBox="1240 45 24 20"><polyline points="1247.5,52 1252.5,57 1257.5,52" fill="none" stroke="#d0d0d0" stroke-width="1.1"/></svg>
<div class="t" id="T34" style="left:1265.9px;top:48.84px;font-size:12px;color:#e2e2e2;font-weight:700;letter-spacing:-0.434px;">Result Properties</div>
<div class="t" id="T35" style="left:1248.4px;top:69.84px;font-size:12px;color:#b9b9b9;font-weight:400;letter-spacing:-0.179px;">Resulting Table Name</div>
<div style="position:absolute;left:1251px;top:95px;width:376px;height:25px;background:#f7f7f7;"></div>
<div class="t" id="T36" style="left:1258px;top:102.84px;font-size:12px;color:#1e1e1e;font-weight:400;letter-spacing:-0.052px;">customerProfile</div>
<svg style="position:absolute;left:1240px;top:144px;" width="24" height="20" viewBox="1240 144 24 20"><polyline points="1246.5,150.5 1251.7,155.7 1256.9,150.5" fill="none" stroke="#d0d0d0" stroke-width="1.1"/></svg>
<svg style="position:absolute;left:1262px;top:142px;" width="22" height="22" viewBox="1262 142 22 22"><rect x="1265.00" y="145.00" width="1.50" height="1.50" fill="#c4c4c4"/><rect x="1265.00" y="147.04" width="1.50" height="3.40" fill="#f0643c"/><rect x="1267.11" y="145.00" width="1.50" height="1.50" fill="#c4c4c4"/><rect x="1267.11" y="147.04" width="1.50" height="3.40" fill="#f0643c"/><rect x="1276.70" y="145.00" width="1.50" height="1.50" fill="#c4c4c4"/><rect x="1276.70" y="147.04" width="1.50" height="3.40" fill="#ffa200"/><rect x="1278.80" y="145.00" width="1.50" height="1.50" fill="#c4c4c4"/><rect x="1278.80" y="147.04" width="1.50" height="3.40" fill="#ffa200"/><rect x="1268.47" y="156.02" width="1.50" height="1.50" fill="#c4c4c4"/><rect x="1268.47" y="157.92" width="1.50" height="3.40" fill="#f0643c"/><rect x="1270.58" y="156.02" width="1.50" height="1.50" fill="#c4c4c4"/><rect x="1270.58" y="157.92" width="1.50" height="3.40" fill="#f0643c"/><rect x="1272.68" y="156.02" width="1.50" height="1.50" fill="#c4c4c4"/><rect x="1272.68" y="157.92" width="1.50" height="3.40" fill="#ffa200"/><rect x="1274.79" y="156.02" width="1.50" height="1.50" fill="#c4c4c4"/><rect x="1274.79" y="157.92" width="1.50" height="3.40" fill="#ffa200"/><rect x="1272.28" y="148.40" width="1.09" height="3.40" fill="#4ea6dc"/><polygon points="1269.76,151.12 1275.47,151.12 1272.82,154.52" fill="#4ea6dc"/></svg>
<div class="t" id="T37" style="left:1290px;top:147.84px;font-size:12px;color:#e2e2e2;font-weight:700;letter-spacing:-0.302px;">Join Node</div>
<div class="t" id="T38" style="left:1248px;top:168.84px;font-size:12px;color:#b9b9b9;font-weight:400;letter-spacing:-0.262px;">Join Type</div>
<div style="position:absolute;left:1248px;top:191px;width:383px;height:26px;box-sizing:border-box;border:1px solid #8a8a8a;background:transparent;"></div>
<div class="t" id="T39" style="left:1259.2px;top:198.84px;font-size:12px;color:#e6e6e6;font-weight:400;letter-spacing:-0.190px;">Inner Join</div>
<svg style="position:absolute;left:1605px;top:195px;" width="20" height="16" viewBox="1605 195 20 16"><polygon points="1609.5,201.5 1621,201.5 1615.25,207" fill="#c8c8c8"/></svg>
<svg style="position:absolute;left:1510px;top:230px;" width="22" height="22" viewBox="1510 230 22 22"><g fill="#7f8c98"><rect x="1519" y="234.3" width="3" height="14.6"/><rect x="1513" y="240.1" width="15" height="3"/></g></svg>
<div class="t" id="T40" style="left:1535px;top:236.14px;font-size:12px;color:#b5b5b5;font-weight:400;letter-spacing:-0.149px;">Add Join Columns</div>
<div style="position:absolute;left:1248px;top:260px;width:383px;height:343px;background:#2b2b2b;"></div>
<div style="position:absolute;left:1249px;top:261px;width:151px;height:29px;background:#474747;"></div>
<div style="position:absolute;left:1401px;top:261px;width:37px;height:29px;background:#474747;"></div>
<div style="position:absolute;left:1439px;top:261px;width:152px;height:29px;background:#474747;"></div>
<div style="position:absolute;left:1592px;top:261px;width:38px;height:29px;background:#474747;"></div>
<div style="position:absolute;left:1249px;top:291px;width:151px;height:29px;background:#535353;"></div>
<div style="position:absolute;left:1401px;top:291px;width:37px;height:29px;background:#535353;"></div>
<div style="position:absolute;left:1439px;top:291px;width:152px;height:29px;background:#535353;"></div>
<div style="position:absolute;left:1592px;top:291px;width:38px;height:29px;background:#535353;"></div>
<div style="position:absolute;left:1249px;top:321px;width:381px;height:282px;background:#535353;"></div>
<div class="t" id="T41" style="left:1254.3px;top:269.62px;font-size:12.5px;color:#b4b4b4;font-weight:700;letter-spacing:-0.211px;">customerProfile</div>
<div class="t" id="T42" style="left:1444.8px;top:269.62px;font-size:12.5px;color:#b4b4b4;font-weight:700;letter-spacing:-0.926px;">data</div>
<div class="t" id="T43" style="left:1259.5px;top:297.84px;font-size:12px;color:#e0e0e0;font-weight:400;letter-spacing:-0.264px;">Education</div>
<div class="t" id="T44" style="left:1449.7px;top:297.84px;font-size:12px;color:#e0e0e0;font-weight:400;letter-spacing:-0.289px;">Education_GroupBy</div>
<svg style="position:absolute;left:1375px;top:298px;" width="210" height="14" viewBox="1375 298 210 14"><polygon points="1380.5,303.2 1390,303.2 1385.25,308" fill="#b0b0b0"/><polygon points="1570,303.2 1580,303.2 1575,308" fill="#b0b0b0"/></svg>
<svg style="position:absolute;left:1412px;top:297px;" width="14" height="12" viewBox="1412 297 14 12"><g fill="#111"><rect x="1416" y="300.8" width="7.5" height="1.4"/><rect x="1416" y="304.6" width="7.5" height="1.4"/></g></svg>
<div style="position:absolute;left:284px;top:441px;width:927px;height:27px;background:#535353;"></div>
<div style="position:absolute;left:284px;top:468px;width:927px;height:26px;background:#474747;"></div>
<div style="position:absolute;left:284px;top:494px;width:927px;height:26px;background:#515151;"></div>
<div style="position:absolute;left:284px;top:520px;width:927px;height:26px;background:#474747;"></div>
<div style="position:absolute;left:284px;top:546px;width:927px;height:26px;background:#515151;"></div>
<div style="position:absolute;left:284px;top:572px;width:927px;height:26px;background:#474747;"></div>
<div style="position:absolute;left:312px;top:441px;width:1px;height:27px;background:#262626;"></div>
<div style="position:absolute;left:312px;top:468px;width:1px;height:123px;background:#3d3d3d;"></div>
<div style="position:absolute;left:412px;top:441px;width:1px;height:27px;background:#262626;"></div>
<div style="position:absolute;left:412px;top:468px;width:1px;height:123px;background:#3d3d3d;"></div>
<div style="position:absolute;left:512px;top:441px;width:1px;height:27px;background:#262626;"></div>
<div style="position:absolute;left:512px;top:468px;width:1px;height:123px;background:#3d3d3d;"></div>
<div style="position:absolute;left:612px;top:441px;width:1px;height:27px;background:#262626;"></div>
<div style="position:absolute;left:612px;top:468px;width:1px;height:123px;background:#3d3d3d;"></div>
<div style="position:absolute;left:712px;top:441px;width:1px;height:27px;background:#262626;"></div>
<div style="position:absolute;left:712px;top:468px;width:1px;height:123px;background:#3d3d3d;"></div>
<div style="position:absolute;left:812px;top:441px;width:1px;height:27px;background:#262626;"></div>
<div style="position:absolute;left:812px;top:468px;width:1px;height:123px;background:#3d3d3d;"></div>
<div style="position:absolute;left:912px;top:441px;width:1px;height:27px;background:#262626;"></div>
<div style="position:absolute;left:912px;top:468px;width:1px;height:123px;background:#3d3d3d;"></div>
<div style="position:absolute;left:1074px;top:441px;width:1px;height:27px;background:#262626;"></div>
<div style="position:absolute;left:1074px;top:468px;width:1px;height:123px;background:#3d3d3d;"></div>
<svg style="position:absolute;left:317px;top:445px;" width="20" height="18" viewBox="317 445 20 18"><rect x="321.8" y="449.0" width="13.2" height="1.8" fill="#3d9bff"/><rect x="321.8" y="452.0" width="10.2" height="1.8" fill="#3d9bff"/><rect x="321.8" y="455.0" width="7.2" height="1.8" fill="#3d9bff"/><rect x="321.8" y="458.0" width="4.2" height="1.8" fill="#3d9bff"/></svg>
<div class="t" id="T45" style="left:336.3px;top:450.42px;font-size:12.5px;color:#ffffff;font-weight:700;letter-spacing:-0.720px;">Occupa...</div>
<svg style="position:absolute;left:417px;top:445px;" width="20" height="18" viewBox="417 445 20 18"><rect x="421.8" y="449.0" width="13.2" height="1.8" fill="#3d9bff"/><rect x="421.8" y="452.0" width="10.2" height="1.8" fill="#3d9bff"/><rect x="421.8" y="455.0" width="7.2" height="1.8" fill="#3d9bff"/><rect x="421.8" y="458.0" width="4.2" height="1.8" fill="#3d9bff"/></svg>
<div class="t" id="T46" style="left:436.3px;top:450.42px;font-size:12.5px;color:#ffffff;font-weight:700;letter-spacing:-0.391px;">Home ...</div>
<svg style="position:absolute;left:517px;top:445px;" width="20" height="18" viewBox="517 445 20 18"><rect x="521.8" y="449.0" width="13.2" height="1.8" fill="#3d9bff"/><rect x="521.8" y="452.0" width="10.2" height="1.8" fill="#3d9bff"/><rect x="521.8" y="455.0" width="7.2" height="1.8" fill="#3d9bff"/><rect x="521.8" y="458.0" width="4.2" height="1.8" fill="#3d9bff"/></svg>
<div class="t" id="T47" style="left:536.3px;top:450.42px;font-size:12.5px;color:#ffffff;font-weight:700;letter-spacing:-1.049px;">Cars</div>
<svg style="position:absolute;left:617px;top:445px;" width="20" height="18" viewBox="617 445 20 18"><rect x="621.8" y="449.0" width="13.2" height="1.8" fill="#3d9bff"/><rect x="621.8" y="452.0" width="10.2" height="1.8" fill="#3d9bff"/><rect x="621.8" y="455.0" width="7.2" height="1.8" fill="#3d9bff"/><rect x="621.8" y="458.0" width="4.2" height="1.8" fill="#3d9bff"/></svg>
<div class="t" id="T48" style="left:636.3px;top:450.42px;font-size:12.5px;color:#ffffff;font-weight:700;letter-spacing:-0.616px;">Comm...</div>
<svg style="position:absolute;left:717px;top:445px;" width="20" height="18" viewBox="717 445 20 18"><rect x="721.8" y="449.0" width="13.2" height="1.8" fill="#3d9bff"/><rect x="721.8" y="452.0" width="10.2" height="1.8" fill="#3d9bff"/><rect x="721.8" y="455.0" width="7.2" height="1.8" fill="#3d9bff"/><rect x="721.8" y="458.0" width="4.2" height="1.8" fill="#3d9bff"/></svg>
<div class="t" id="T49" style="left:736.3px;top:450.42px;font-size:12.5px;color:#ffffff;font-weight:700;letter-spacing:-0.542px;">Age</div>
<svg style="position:absolute;left:817px;top:445px;" width="20" height="18" viewBox="817 445 20 18"><rect x="821.8" y="449.0" width="13.2" height="1.8" fill="#3d9bff"/><rect x="821.8" y="452.0" width="10.2" height="1.8" fill="#3d9bff"/><rect x="821.8" y="455.0" width="7.2" height="1.8" fill="#3d9bff"/><rect x="821.8" y="458.0" width="4.2" height="1.8" fill="#3d9bff"/></svg>
<div class="t" id="T50" style="left:836.3px;top:450.42px;font-size:12.5px;color:#ffffff;font-weight:700;letter-spacing:-0.644px;">Purcha...</div>
<svg style="position:absolute;left:917px;top:445px;" width="20" height="18" viewBox="917 445 20 18"><rect x="921.8" y="449.0" width="13.2" height="1.8" fill="#3d9bff"/><rect x="921.8" y="452.0" width="10.2" height="1.8" fill="#3d9bff"/><rect x="921.8" y="455.0" width="7.2" height="1.8" fill="#3d9bff"/><rect x="921.8" y="458.0" width="4.2" height="1.8" fill="#3d9bff"/></svg>
<div class="t" id="T51" style="left:936.3px;top:450.42px;font-size:12.5px;color:#ffffff;font-weight:700;letter-spacing:-0.873px;">Education_GroupBy</div>
<svg style="position:absolute;left:1079px;top:445px;" width="20" height="18" viewBox="1079 445 20 18"><rect x="1083.8" y="449.0" width="13.2" height="1.8" fill="#3d9bff"/><rect x="1083.8" y="452.0" width="10.2" height="1.8" fill="#3d9bff"/><rect x="1083.8" y="455.0" width="7.2" height="1.8" fill="#3d9bff"/><rect x="1083.8" y="458.0" width="4.2" height="1.8" fill="#3d9bff"/></svg>
<div class="t" id="T52" style="left:1098.3px;top:450.42px;font-size:12.5px;color:#ffffff;font-weight:700;letter-spacing:-0.887px;">Income_Avg</div>
<div style="position:absolute;left:284px;top:457px;width:2px;height:3px;background:#e0c8a0;"></div>
<div class="t" id="T53" style="left:319.5px;top:476.42px;font-size:12.5px;color:#c4c4c4;font-weight:400;letter-spacing:-0.307px;">Skilled Manual</div>
<div class="t" id="T54" style="left:419.5px;top:476.42px;font-size:12.5px;color:#c4c4c4;font-weight:400;letter-spacing:-1.102px;">Yes</div>
<div class="t" id="T55" style="left:519.5px;top:476.42px;font-size:12.5px;color:#c4c4c4;font-weight:400;">0</div>
<div class="t" id="T56" style="left:619.5px;top:476.42px;font-size:12.5px;color:#c4c4c4;font-weight:400;letter-spacing:-0.202px;">0-1 Miles</div>
<div class="t" id="T57" style="left:719.5px;top:476.42px;font-size:12.5px;color:#c4c4c4;font-weight:400;letter-spacing:-0.203px;">42</div>
<div class="t" id="T58" style="left:819.5px;top:476.42px;font-size:12.5px;color:#c4c4c4;font-weight:400;letter-spacing:-0.242px;">No</div>
<div class="t" id="T59" style="left:919.5px;top:476.42px;font-size:12.5px;color:#c4c4c4;font-weight:400;letter-spacing:-0.488px;">Bachelors</div>
<div class="t" id="T60" style="left:1081.5px;top:476.42px;font-size:12.5px;color:#c4c4c4;font-weight:400;letter-spacing:-0.413px;">46200</div>
<div class="t" id="T61" style="left:319.5px;top:502.42px;font-size:12.5px;color:#c4c4c4;font-weight:400;letter-spacing:-0.425px;">Professional</div>
<div class="t" id="T62" style="left:419.5px;top:502.42px;font-size:12.5px;color:#c4c4c4;font-weight:400;letter-spacing:-1.102px;">Yes</div>
<div class="t" id="T63" style="left:519.5px;top:502.42px;font-size:12.5px;color:#c4c4c4;font-weight:400;">1</div>
<div class="t" id="T64" style="left:619.5px;top:502.42px;font-size:12.5px;color:#c4c4c4;font-weight:400;letter-spacing:-0.207px;">5-10 Miles</div>
<div class="t" id="T65" style="left:719.5px;top:502.42px;font-size:12.5px;color:#c4c4c4;font-weight:400;letter-spacing:-0.453px;">41</div>
<div class="t" id="T66" style="left:819.5px;top:502.42px;font-size:12.5px;color:#c4c4c4;font-weight:400;letter-spacing:-1.102px;">Yes</div>
<div class="t" id="T67" style="left:919.5px;top:502.42px;font-size:12.5px;color:#c4c4c4;font-weight:400;letter-spacing:-0.488px;">Bachelors</div>
<div class="t" id="T68" style="left:1081.5px;top:502.42px;font-size:12.5px;color:#c4c4c4;font-weight:400;letter-spacing:-0.413px;">46200</div>
<div class="t" id="T69" style="left:319.5px;top:528.42px;font-size:12.5px;color:#c4c4c4;font-weight:400;letter-spacing:-0.411px;">Clerical</div>
<div class="t" id="T70" style="left:419.5px;top:528.42px;font-size:12.5px;color:#c4c4c4;font-weight:400;letter-spacing:-0.242px;">No</div>
<div class="t" id="T71" style="left:519.5px;top:528.42px;font-size:12.5px;color:#c4c4c4;font-weight:400;">0</div>
<div class="t" id="T72" style="left:619.5px;top:528.42px;font-size:12.5px;color:#c4c4c4;font-weight:400;letter-spacing:-0.202px;">0-1 Miles</div>
<div class="t" id="T73" style="left:719.5px;top:528.42px;font-size:12.5px;color:#c4c4c4;font-weight:400;letter-spacing:-0.203px;">36</div>
<div class="t" id="T74" style="left:819.5px;top:528.42px;font-size:12.5px;color:#c4c4c4;font-weight:400;letter-spacing:-1.102px;">Yes</div>
<div class="t" id="T75" style="left:919.5px;top:528.42px;font-size:12.5px;color:#c4c4c4;font-weight:400;letter-spacing:-0.488px;">Bachelors</div>
<div class="t" id="T76" style="left:1081.5px;top:528.42px;font-size:12.5px;color:#c4c4c4;font-weight:400;letter-spacing:-0.413px;">46200</div>
<div class="t" id="T77" style="left:319.5px;top:554.42px;font-size:12.5px;color:#c4c4c4;font-weight:400;letter-spacing:-0.307px;">Skilled Manual</div>
<div class="t" id="T78" style="left:419.5px;top:554.42px;font-size:12.5px;color:#c4c4c4;font-weight:400;letter-spacing:-1.102px;">Yes</div>
<div class="t" id="T79" style="left:519.5px;top:554.42px;font-size:12.5px;color:#c4c4c4;font-weight:400;">0</div>
<div class="t" id="T80" style="left:619.5px;top:554.42px;font-size:12.5px;color:#c4c4c4;font-weight:400;letter-spacing:-0.202px;">0-1 Miles</div>
<div class="t" id="T81" style="left:719.5px;top:554.42px;font-size:12.5px;color:#c4c4c4;font-weight:400;letter-spacing:-0.203px;">43</div>
<div class="t" id="T82" style="left:819.5px;top:554.42px;font-size:12.5px;color:#c4c4c4;font-weight:400;letter-spacing:-1.102px;">Yes</div>
<div class="t" id="T83" style="left:919.5px;top:554.42px;font-size:12.5px;color:#c4c4c4;font-weight:400;letter-spacing:-0.488px;">Bachelors</div>
<div class="t" id="T84" style="left:1081.5px;top:554.42px;font-size:12.5px;color:#c4c4c4;font-weight:400;letter-spacing:-0.413px;">46200</div>
<div class="t" id="T85" style="left:319.5px;top:580.42px;font-size:12.5px;color:#c4c4c4;font-weight:400;letter-spacing:-0.425px;">Professional</div>
<div class="t" id="T86" style="left:419.5px;top:580.42px;font-size:12.5px;color:#c4c4c4;font-weight:400;letter-spacing:-0.242px;">No</div>
<div class="t" id="T87" style="left:519.5px;top:580.42px;font-size:12.5px;color:#c4c4c4;font-weight:400;">4</div>
<div class="t" id="T88" style="left:619.5px;top:580.42px;font-size:12.5px;color:#c4c4c4;font-weight:400;letter-spacing:-0.207px;">10+ Miles</div>
<div class="t" id="T89" style="left:719.5px;top:580.42px;font-size:12.5px;color:#c4c4c4;font-weight:400;letter-spacing:-0.203px;">36</div>
<div class="t" id="T90" style="left:819.5px;top:580.42px;font-size:12.5px;color:#c4c4c4;font-weight:400;letter-spacing:-0.242px;">No</div>
<div class="t" id="T91" style="left:919.5px;top:580.42px;font-size:12.5px;color:#c4c4c4;font-weight:400;letter-spacing:-0.488px;">Bachelors</div>
<div class="t" id="T92" style="left:1081.5px;top:580.42px;font-size:12.5px;color:#c4c4c4;font-weight:400;letter-spacing:-0.413px;">46200</div>
<div style="position:absolute;left:1211px;top:441px;width:11px;height:150px;background:#4d4d4d;"></div>
<div style="position:absolute;left:1212px;top:479px;width:9px;height:17px;background:#666666;"></div>
<svg style="position:absolute;left:1208px;top:465px;" width="16" height="126" viewBox="1208 465 16 126"><polygon points="1212.5,474 1220.5,474 1216.5,469.5" fill="#bdbdbd"/><polygon points="1212.5,582 1220.5,582 1216.5,586.5" fill="#bdbdbd"/></svg>
<div style="position:absolute;left:284px;top:591px;width:927px;height:11px;background:#474747;"></div>
<div style="position:absolute;left:640px;top:591px;width:562px;height:11px;background:#6a6a6a;"></div>
<svg style="position:absolute;left:284px;top:589px;" width="930" height="14" viewBox="284 589 930 14"><polygon points="290.5,592.5 290.5,600.5 286,596.5" fill="#bdbdbd"/><polygon points="1202,592.5 1202,600.5 1206.5,596.5" fill="#bdbdbd"/></svg>
<div style="position:absolute;left:1211px;top:591px;width:11px;height:11px;background:#ffffff;"></div>
<svg style="position:absolute;left:1150px;top:415px;" width="66" height="22" viewBox="1150 415 66 22"><g fill="none" stroke="#cfcfcf" stroke-width="1.1">
<path d="M1156,426 Q1163,416.5 1170,426 Q1163,435.5 1156,426Z"/><circle cx="1163" cy="426" r="2.5"/>
<polyline points="1202.5,424 1207.2,428.7 1211.9,424"/></g>
<path d="M1184.2,420.6 L1190.4,426.8 L1188.8,427.4 L1186.4,429.8 L1186.2,431.6 L1181.5,426.9 L1183.3,426.7 L1185.7,424.3 L1184.2,420.6z M1183.2,428.6 L1180.2,431.6" fill="#cfcfcf" stroke="#cfcfcf" stroke-width="1"/></svg>
<div style="position:absolute;left:911px;top:440px;width:300px;height:154px;box-sizing:border-box;border:3px solid #e64646;background:transparent;"></div>
<svg style="position:absolute;left:200px;top:30px;" width="820" height="170" viewBox="200 30 820 170"><defs><filter id="sh" x="-5%" y="-50%" width="110%" height="200%"><feGaussianBlur in="SourceAlpha" stdDeviation="1.8"/><feOffset dx="-1" dy="2.5" result="b"/><feComponentTransfer><feFuncA type="linear" slope="0.32"/></feComponentTransfer><feMerge><feMergeNode/><feMergeNode in="SourceGraphic"/></feMerge></filter></defs>
<g filter="url(#sh)">
<line x1="220.1" y1="51.88" x2="986.3" y2="170.65" stroke="#e64646" stroke-width="5.2" stroke-dasharray="15.7 4.3"/>
<circle cx="220.5" cy="51.940000000000005" r="2.6" fill="#e64646"/>
<polygon points="1003.3,173.3 990.3,164.2 987.6,178.9" fill="#e64646"/>
</g></svg>
<svg style="position:absolute;left:1075px;top:84px;" width="52" height="52" viewBox="1075 84 52 52"><defs><filter id="bs4" x="-30%" y="-30%" width="160%" height="160%"><feGaussianBlur in="SourceAlpha" stdDeviation="1.5"/><feOffset dx="-0.8" dy="1.6"/><feComponentTransfer><feFuncA type="linear" slope="0.32"/></feComponentTransfer><feMerge><feMergeNode/><feMergeNode in="SourceGraphic"/></feMerge></filter></defs>
<circle cx="1101" cy="110" r="19.9" fill="#e64646" filter="url(#bs4)"/></svg>
<svg style="position:absolute;left:1364px;top:127.5px;" width="52" height="52" viewBox="1364 127.5 52 52"><defs><filter id="bs5" x="-30%" y="-30%" width="160%" height="160%"><feGaussianBlur in="SourceAlpha" stdDeviation="1.5"/><feOffset dx="-0.8" dy="1.6"/><feComponentTransfer><feFuncA type="linear" slope="0.32"/></feComponentTransfer><feMerge><feMergeNode/><feMergeNode in="SourceGraphic"/></feMerge></filter></defs>
<circle cx="1390" cy="153.5" r="19.9" fill="#e64646" filter="url(#bs5)"/></svg>
<svg style="position:absolute;left:1094px;top:390px;" width="52" height="52" viewBox="1094 390 52 52"><defs><filter id="bs6" x="-30%" y="-30%" width="160%" height="160%"><feGaussianBlur in="SourceAlpha" stdDeviation="1.5"/><feOffset dx="-0.8" dy="1.6"/><feComponentTransfer><feFuncA type="linear" slope="0.32"/></feComponentTransfer><feMerge><feMergeNode/><feMergeNode in="SourceGraphic"/></feMerge></filter></defs>
<circle cx="1120" cy="416" r="19.9" fill="#e64646" filter="url(#bs6)"/></svg>
<div class="t" id="T93" style="left:1092px;top:94.26px;font-size:31px;color:#ffffff;font-weight:400;-webkit-text-stroke:0.45px #e64646;">4</div>
<div class="t" id="T94" style="left:1381px;top:137.76px;font-size:31px;color:#ffffff;font-weight:400;-webkit-text-stroke:0.45px #e64646;">5</div>
<div class="t" id="T95" style="left:1111.5px;top:399.96px;font-size:31px;color:#ffffff;font-weight:400;-webkit-text-stroke:0.45px #e64646;">6</div>
<div style="position:absolute;left:0px;top:602px;width:1655px;height:1px;background:#000000;"></div>
<div style="position:absolute;left:1654px;top:0px;width:1px;height:603px;background:#000000;"></div>
</body></html>
